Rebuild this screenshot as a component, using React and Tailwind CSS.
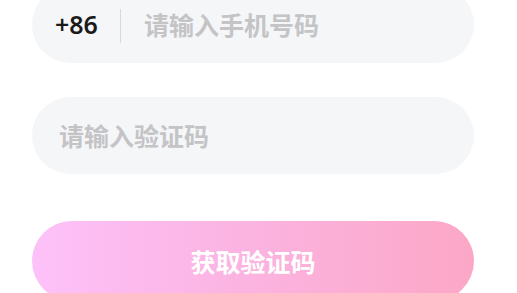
export default function App() {
  const font = { fontFamily: '"Noto Sans CJK SC", "Noto Sans", sans-serif' };
  const latin = { fontFamily: '"Noto Sans", "Noto Sans CJK SC", sans-serif' };
  return (
    <div className="w-[517px] h-[293px] overflow-hidden bg-white" style={font}>
      <div className="flex flex-col pl-[32px] w-[474px] -mt-[14px]">
        <div className="h-[77px] rounded-full bg-[#f5f6f8] flex items-center pl-[23px]">
          <span className="text-[25px] font-semibold text-[#1a1a1a] leading-none" style={latin}>+86</span>
          <div className="w-px h-[34px] bg-[#d9d9d9] ml-[22px] self-start mt-[23px]" />
          <span className="ml-[23px] text-[25px] font-semibold text-[#c4c4c6] leading-none">请输入手机号码</span>
        </div>
        <div className="h-[77px] mt-[34px] rounded-full bg-[#f5f6f8] flex items-center pl-[27px]">
          <span className="text-[25px] font-semibold text-[#c4c4c6] leading-none">请输入验证码</span>
        </div>
        <div className="h-[80px] mt-[47px] rounded-full bg-gradient-to-r from-[#fdc1f9] via-[#fbb3e0] to-[#fca7c6] flex items-center justify-center">
          <span className="text-[25px] font-bold text-white leading-none">获取验证码</span>
        </div>
      </div>
    </div>
  );
}
